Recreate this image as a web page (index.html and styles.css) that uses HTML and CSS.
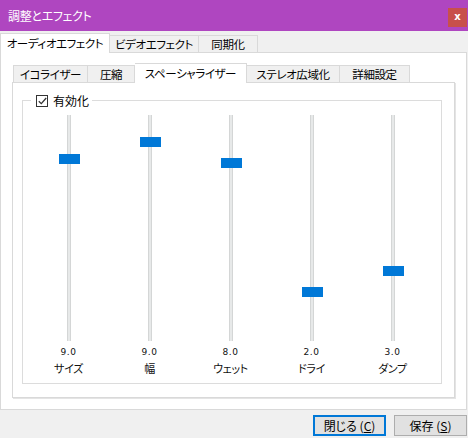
FILE: index.html
```html
<!DOCTYPE html>
<html lang="ja">
<head>
<meta charset="utf-8">
<title>調整とエフェクト</title>
<link rel="stylesheet" href="styles.css">
</head>
<body>
<div class="window">
  <div class="titlebar">
    <span class="title">調整とエフェクト</span>
    <span class="close">x</span>
  </div>
  <div class="content">
    <div class="tabs outer-tabs">
      <div class="tab active w-audio">オーディオエフェクト</div>
      <div class="tab w-video">ビデオエフェクト</div>
      <div class="tab w-sync">同期化</div>
    </div>
    <div class="pane">
      <div class="tabs inner-tabs">
        <div class="tab w-eq">イコライザー</div>
        <div class="tab w-comp">圧縮</div>
        <div class="tab active w-spat">スペーシャライザー</div>
        <div class="tab w-stereo">ステレオ広域化</div>
        <div class="tab w-adv">詳細設定</div>
      </div>
      <div class="inner-pane">
        <fieldset class="group">
          <legend class="legend"><span class="check"><svg width="9" height="8" viewBox="0 0 9 8"><path d="M0.8 4.2 L3.3 6.6 L8.2 1" fill="none" stroke="#333" stroke-width="1.3"/></svg></span><span class="legend-text">有効化</span></legend>
          <div class="sliders">
            <div class="slider">
              <div class="track"><div class="thumb" style="top:39px"></div></div>
              <div class="value">9.0</div>
              <div class="label">サイズ</div>
            </div>
            <div class="slider">
              <div class="track"><div class="thumb" style="top:22px"></div></div>
              <div class="value">9.0</div>
              <div class="label">幅</div>
            </div>
            <div class="slider">
              <div class="track"><div class="thumb" style="top:43px"></div></div>
              <div class="value">8.0</div>
              <div class="label">ウェット</div>
            </div>
            <div class="slider">
              <div class="track"><div class="thumb" style="top:172px"></div></div>
              <div class="value">2.0</div>
              <div class="label">ドライ</div>
            </div>
            <div class="slider">
              <div class="track"><div class="thumb" style="top:151px"></div></div>
              <div class="value">3.0</div>
              <div class="label">ダンプ</div>
            </div>
          </div>
        </fieldset>
      </div>
    </div>
    <div class="buttons">
      <button class="btn default">閉じる (<u>C</u>)</button>
      <button class="btn">保存 (<u>S</u>)</button>
    </div>
  </div>
</div>
</body>
</html>
```
FILE: styles.css
```css
* { box-sizing: border-box; }
html, body { margin: 0; padding: 0; }
body {
  width: 468px;
  height: 438px;
  overflow: hidden;
  background: #f0f0f0;
  font-family: "Noto Sans CJK JP", "Noto Sans", sans-serif;
  font-feature-settings: "palt";
  font-size: 12px;
  color: #000;
}
.window { width: 468px; height: 438px; display: flex; flex-direction: column; }

.titlebar {
  height: 31px;
  background: #af46c0;
  display: flex;
  align-items: flex-start;
  padding-left: 8px;
  flex-shrink: 0;
}
.title {
  color: #fff;
  font-size: 12px;
  letter-spacing: -0.3px;
  line-height: 31px;
}
.close {
  margin-left: auto;
  margin-right: 1px;
  margin-top: 8px;
  width: 19px;
  height: 19px;
  background: #c8504b;
  color: #fff;
  font-family: "DejaVu Sans", sans-serif;
  font-weight: bold;
  font-size: 10px;
  line-height: 18px;
  text-align: center;
}

.content { padding-top: 2px; display: flex; flex-direction: column; }

.tabs { display: flex; align-items: flex-end; position: relative; z-index: 1; }
.tab {
  background: #f0f0f0;
  border: 1px solid #d9d9d9;
  border-bottom: none;
  text-align: center;
  white-space: nowrap;
  font-size: 11.5px;
  letter-spacing: -0.4px;
}
.tab + .tab { border-left: none; }
.tab.active { background: #fff; }

.outer-tabs { height: 19px; }
.outer-tabs .tab { height: 17px; line-height: 17px; }
.outer-tabs .tab.active { height: 20px; line-height: 19px; margin-bottom: -1px; }
.w-audio { width: 110px; }
.w-video { width: 89px; }
.w-sync { width: 59px; }

.pane {
  width: 467px;
  height: 358px;
  background: #fff;
  border: 1px solid #d9d9d9;
  padding: 10px 0 0 11px;
}

.inner-tabs { height: 19px; padding-left: 1px; }
.inner-tabs .tab { height: 17px; line-height: 17px; }
.inner-tabs .tab.active { height: 20px; line-height: 19px; margin-bottom: -1px; }
.w-eq { width: 75px; }
.w-comp { width: 47px; }
.w-spat { width: 112px; }
.w-stereo { width: 93px; }
.w-adv { width: 70px; }

.inner-pane {
  width: 443px;
  height: 316px;
  border: 1px solid #d9d9d9;
  box-shadow: 1px 1px 0 #e4e4e4;
  padding: 11px 0 0 9px;
  background: #fff;
}

.group {
  margin: 0;
  padding: 0 0 0 5px;
  min-width: 0;
  width: 420px;
  height: 290px;
  border: 1px solid #dcdcdc;
}
.legend {
  margin-left: 3px;
  padding: 0 3px 0 5px;
  height: 13px;
  display: flex;
  align-items: center;
  gap: 5px;
}
.check {
  width: 12px;
  height: 12px;
  border: 1px solid #333;
  display: flex;
  align-items: center;
  justify-content: center;
  background: #fff;
}
.legend-text { font-size: 12px; line-height: 13px; }

.sliders {
  display: grid;
  grid-template-columns: repeat(5, 81px);
  padding-top: 8px;
}
.slider { display: flex; flex-direction: column; align-items: center; }
.track {
  position: relative;
  width: 4px;
  height: 226px;
  background: #e7e9e9;
  border-left: 1px solid #d4d6d6;
  border-right: 1px solid #d4d6d6;
}
.thumb {
  position: absolute;
  left: -9px;
  width: 21px;
  height: 10px;
  background: #0078d7;
}
.value {
  margin-top: 6px;
  font-family: "DejaVu Sans", sans-serif;
  font-size: 9px;
  letter-spacing: 0.5px;
  line-height: 11px;
  color: #111;
}
.label {
  margin-top: 4px;
  font-size: 11px;
  letter-spacing: -0.3px;
  line-height: 13px;
  color: #111;
}

.buttons {
  display: flex;
  justify-content: flex-end;
  gap: 8px;
  margin-top: 5px;
  padding-right: 1px;
}
.btn {
  width: 73px;
  height: 21px;
  padding: 0;
  background: #e1e1e1;
  border: 1px solid #adadad;
  font-family: "Noto Sans CJK JP", "Noto Sans", sans-serif;
  font-feature-settings: "palt";
  font-size: 12px;
  line-height: 17px;
  color: #000;
}
.btn.default { border: 2px solid #0078d7; }
.btn u { text-decoration: underline; text-underline-offset: 1px; }
```
